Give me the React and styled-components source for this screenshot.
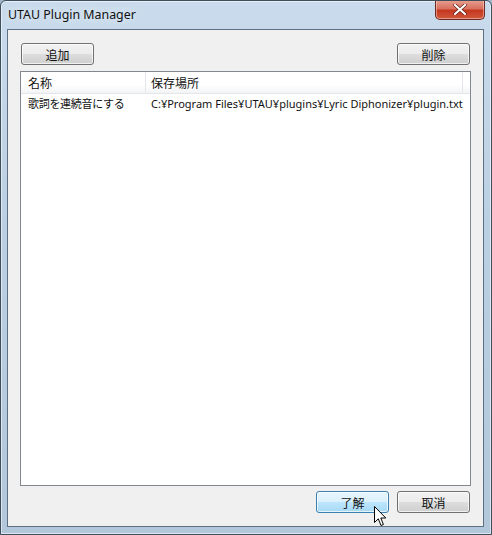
import styled, { createGlobalStyle } from 'styled-components';

const GlobalStyle = createGlobalStyle`
  html, body {
    margin: 0;
    padding: 0;
    background: #9fb6cb;
  }
  * {
    box-sizing: border-box;
  }
`;

const uiFont = `"Noto Sans", "Noto Sans CJK JP", sans-serif`;

const Window = styled.div`
  position: relative;
  width: 492px;
  height: 535px;
  display: flex;
  flex-direction: column;
  background: linear-gradient(180deg, #c9dbec 0%, #bcd0e3 40%, #b2c7da 100%);
  border: 1px solid #3f4e5d;
  border-radius: 6px 6px 0 0;
  box-shadow: inset 0 0 0 1px rgba(255, 255, 255, 0.55);
  font-family: ${uiFont};
  overflow: hidden;
`;

const TitleBar = styled.div`
  height: 28px;
  display: flex;
  justify-content: space-between;
  align-items: flex-start;
  padding: 0 6px 0 7px;
  flex-shrink: 0;
`;

const Title = styled.span`
  margin-top: 5px;
  font-size: 12.4px;
  color: #111;
  text-shadow: 0 0 8px rgba(255, 255, 255, 0.9);
`;

const CloseButton = styled.div`
  width: 50px;
  height: 20px;
  margin-top: -1px;
  display: flex;
  align-items: center;
  justify-content: center;
  border: 1px solid #6b2a22;
  border-top: none;
  border-radius: 0 0 5px 5px;
  background: linear-gradient(180deg, #e8a192 0%, #d8715e 45%, #c4381f 55%, #d2573c 100%);
  box-shadow: inset 0 0 0 1px rgba(255, 220, 210, 0.5);
`;

const Client = styled.div`
  flex: 1;
  margin: 0 7px 7px 6px;
  border: 1px solid #5d6f82;
  background: #f0f0f0;
  display: flex;
  flex-direction: column;
  padding: 13px 12px 13px 12px;
`;

const ButtonRow = styled.div`
  display: flex;
  justify-content: ${(p) => p.$justify || 'space-between'};
  gap: 8px;
  padding: 0 1px;
  flex-shrink: 0;
`;

const Button = styled.div`
  width: 73px;
  height: 22px;
  display: flex;
  align-items: center;
  justify-content: center;
  border: 1px solid ${(p) => (p.$hover ? '#3c7fb1' : '#707070')};
  border-radius: 3px;
  background: ${(p) =>
    p.$hover
      ? 'linear-gradient(180deg, #eaf6fd 0%, #d9f0fc 50%, #bee6fd 50%, #a7d9f5 100%)'
      : 'linear-gradient(180deg, #f2f2f2 0%, #ebebeb 50%, #dddddd 50%, #cfcfcf 100%)'};
  box-shadow: inset 0 0 0 1px rgba(255, 255, 255, 0.7);
  font-family: "Noto Sans CJK JP", sans-serif;
  font-size: 12px;
  color: #111;
`;

const ListView = styled.div`
  flex: 1;
  margin: 6px 0 5px;
  border: 1px solid #828790;
  background: #fff;
  display: flex;
  flex-direction: column;
`;

const Header = styled.div`
  height: 22px;
  display: flex;
  background: linear-gradient(180deg, #ffffff 0%, #ffffff 60%, #f3f4f6 100%);
  border-bottom: 1px solid #e3e6ea;
`;

const HeaderCell = styled.div`
  width: ${(p) => p.$w}px;
  flex-shrink: 0;
  display: flex;
  align-items: center;
  padding-left: ${(p) => p.$pad}px;
  border-right: 1px solid #e3e6ea;
  font-family: "Noto Sans CJK JP", sans-serif;
  font-size: 12px;
  color: #111;
`;

const Row = styled.div`
  height: 18px;
  display: flex;
  align-items: center;
`;

const Cell = styled.div`
  width: ${(p) => p.$w}px;
  flex-shrink: 0;
  padding-left: ${(p) => p.$pad}px;
  white-space: nowrap;
  font-family: ${(p) => (p.$latin ? '"Noto Sans", "Noto Sans CJK JP", sans-serif' : '"Noto Sans CJK JP", sans-serif')};
  font-size: 11px;
  color: #111;
  letter-spacing: ${(p) => (p.$latin ? '0' : '-0.3px')};
`;

const Cursor = styled.svg`
  position: absolute;
  left: 373px;
  top: 505px;
`;

const columns = [
  { w: 125, pad: 7, label: '名称' },
  { w: 317, pad: 5, label: '保存場所' },
];

const plugins = [
  {
    name: '歌詞を連続音にする',
    path: 'C:¥Program Files¥UTAU¥plugins¥Lyric Diphonizer¥plugin.txt',
  },
];

export default function App() {
  return (
    <>
      <GlobalStyle />
      <Window>
        <TitleBar>
          <Title>UTAU Plugin Manager</Title>
          <CloseButton>
            <svg width="14" height="11" viewBox="0 0 14 11">
              <path
                d="M2 1 L12 10 M12 1 L2 10"
                stroke="#5a1a10"
                strokeWidth="3.4"
                strokeLinecap="round"
              />
              <path
                d="M2 1 L12 10 M12 1 L2 10"
                stroke="#fff"
                strokeWidth="2.2"
                strokeLinecap="round"
              />
            </svg>
          </CloseButton>
        </TitleBar>
        <Client>
          <ButtonRow>
            <Button>追加</Button>
            <Button>削除</Button>
          </ButtonRow>
          <ListView>
            <Header>
              {columns.map((c) => (
                <HeaderCell key={c.label} $w={c.w} $pad={c.pad}>
                  {c.label}
                </HeaderCell>
              ))}
            </Header>
            {plugins.map((p) => (
              <Row key={p.path}>
                <Cell $w={125} $pad={7}>
                  {p.name}
                </Cell>
                <Cell $w={325} $pad={5} $latin>
                  {p.path}
                </Cell>
              </Row>
            ))}
          </ListView>
          <ButtonRow $justify="flex-end">
            <Button $hover>了解</Button>
            <Button>取消</Button>
          </ButtonRow>
        </Client>
        <Cursor width="13" height="21" viewBox="0 0 13 21">
          <path
            d="M0.5 0.5 L0.5 16.5 L4.3 12.8 L7 19.5 L9.4 18.5 L6.8 12 L11.8 12 Z"
            fill="#fff"
            stroke="#000"
            strokeWidth="1"
            strokeLinejoin="miter"
          />
        </Cursor>
      </Window>
    </>
  );
}
